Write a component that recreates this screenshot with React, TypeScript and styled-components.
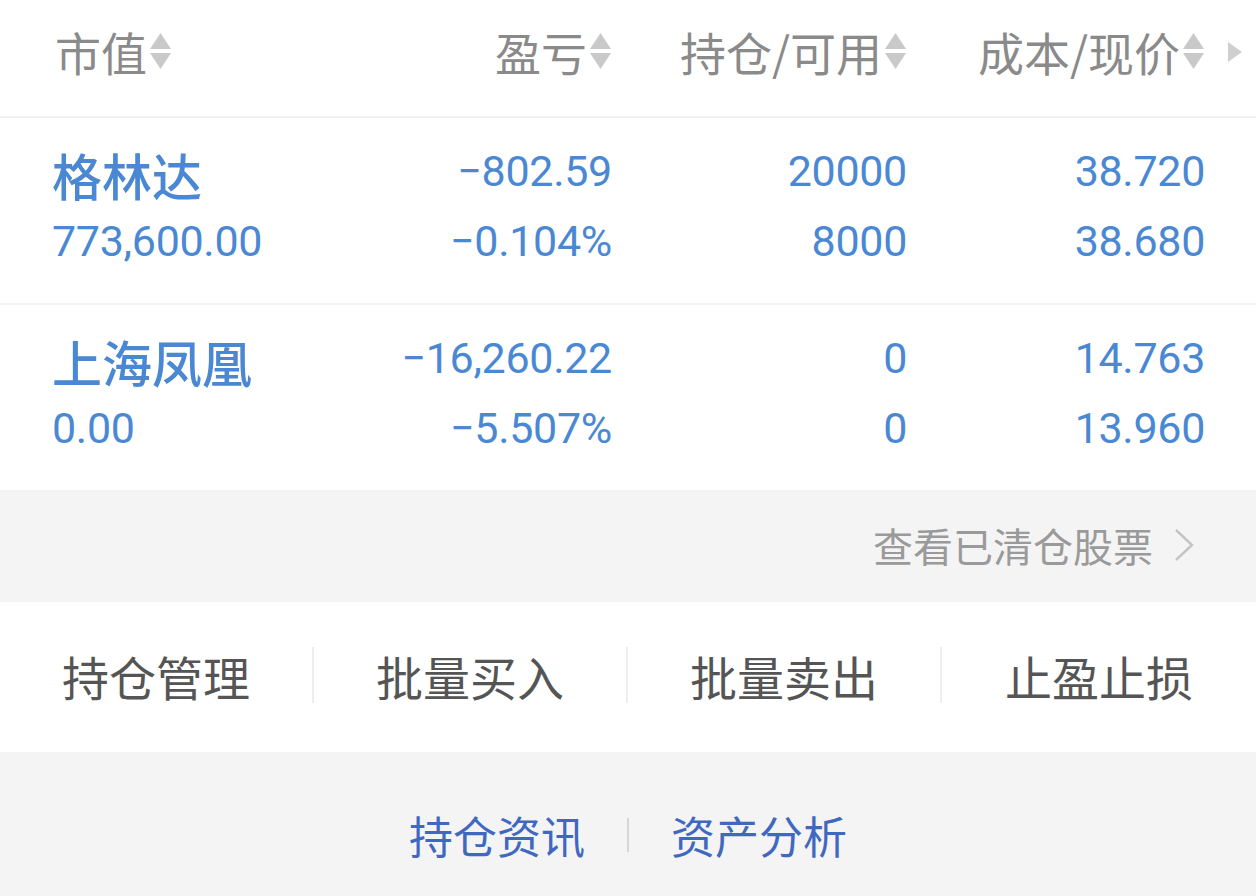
import React from "react";
import styled, { createGlobalStyle } from "styled-components";

interface Holding {
  name: string;
  marketValue: string;
  profit: string;
  profitRate: string;
  position: string;
  available: string;
  cost: string;
  price: string;
}

const holdings: Holding[] = [
  {
    name: "格林达",
    marketValue: "773,600.00",
    profit: "−802.59",
    profitRate: "−0.104%",
    position: "20000",
    available: "8000",
    cost: "38.720",
    price: "38.680",
  },
  {
    name: "上海凤凰",
    marketValue: "0.00",
    profit: "−16,260.22",
    profitRate: "−5.507%",
    position: "0",
    available: "0",
    cost: "14.763",
    price: "13.960",
  },
];

const headers = [
  { label: "市值", align: "left" },
  { label: "盈亏", align: "right" },
  { label: "持仓/可用", align: "right" },
  { label: "成本/现价", align: "right" },
];

const actions = ["持仓管理", "批量买入", "批量卖出", "止盈止损"];

const App: React.FC = () => {
  return (
    <Page>
      <GlobalStyle />
      <Header>
        <HeaderGrid>
          {headers.map((h) => (
            <HeaderCell key={h.label} $align={h.align}>
              {h.label}
              <SortIcon width="23" height="38" viewBox="0 0 23 38">
                <path d="M11.5 1 L22 17 L1 17 Z" fill="#c9c9c9" />
                <path d="M1 21 L22 21 L11.5 37 Z" fill="#c9c9c9" />
              </SortIcon>
            </HeaderCell>
          ))}
        </HeaderGrid>
        <MoreArrow width="15" height="20" viewBox="0 0 15 20">
          <path d="M1 0 L15 10 L1 20 Z" fill="#cfcfcf" />
        </MoreArrow>
      </Header>
      {holdings.map((h) => (
        <Row key={h.name}>
          <Cell $align="left">
            <Name>{h.name}</Name>
            <Num>{h.marketValue}</Num>
          </Cell>
          <Cell $align="right">
            <Num>{h.profit}</Num>
            <Num>{h.profitRate}</Num>
          </Cell>
          <Cell $align="right">
            <Num>{h.position}</Num>
            <Num>{h.available}</Num>
          </Cell>
          <Cell $align="right">
            <Num>{h.cost}</Num>
            <Num>{h.price}</Num>
          </Cell>
        </Row>
      ))}
      <ClearedBar>
        <ClearedLink>
          查看已清仓股票
          <svg width="22" height="34" viewBox="0 0 22 34">
            <path d="M3 2 L19 17 L3 32" fill="none" stroke="#c4c4c4" strokeWidth="2.4" />
          </svg>
        </ClearedLink>
      </ClearedBar>
      <ActionBar>
        {actions.map((a, i) => (
          <ActionButton key={a} $divider={i < actions.length - 1}>
            {a}
          </ActionButton>
        ))}
      </ActionBar>
      <FooterBar>
        <FooterLink>持仓资讯</FooterLink>
        <FooterDivider />
        <FooterLink>资产分析</FooterLink>
      </FooterBar>
    </Page>
  );
};

export default App;

const GlobalStyle = createGlobalStyle`
  html, body {
    margin: 0;
    padding: 0;
    background: #ffffff;
  }
  body {
    font-family: "Noto Sans CJK SC", "Noto Sans", sans-serif;
  }
`;

const Page = styled.div`
  width: 1256px;
  height: 896px;
  overflow: hidden;
  background: #ffffff;
`;

const Header = styled.div`
  position: relative;
  height: 116px;
  padding: 0 51px 0 52px;
  border-bottom: 2px solid #f0f0f0;
`;

const HeaderGrid = styled.div`
  display: grid;
  grid-template-columns: 260px 300px 295px 298px;
  height: 100%;
  align-items: center;
`;

const HeaderCell = styled.div<{ $align: string }>`
  display: flex;
  align-items: center;
  justify-content: ${(p) => (p.$align === "left" ? "flex-start" : "flex-end")};
  padding-left: ${(p) => (p.$align === "left" ? "3px" : "0")};
  font-size: 46px;
  color: #8a8a8a;
  line-height: 1;
  margin-top: -14px;
`;

const SortIcon = styled.svg`
  margin-left: 2px;
  flex-shrink: 0;
`;

const MoreArrow = styled.svg`
  position: absolute;
  right: 14px;
  top: 42px;
`;

const Row = styled.div`
  display: grid;
  grid-template-columns: 260px 300px 295px 298px;
  padding: 18px 51px 27px 52px;
  border-bottom: 2px solid #f3f3f3;
  &:last-of-type {
    border-bottom: none;
  }
`;

const Cell = styled.div<{ $align: string }>`
  display: flex;
  flex-direction: column;
  align-items: ${(p) => (p.$align === "left" ? "flex-start" : "flex-end")};
`;

const Name = styled.div`
  font-size: 50px;
  font-weight: 500;
  color: #4a88d4;
  line-height: 70px;
  height: 70px;
  padding-top: 3px;
  box-sizing: border-box;
`;

const Num = styled.div`
  font-family: Roboto, "Noto Sans", sans-serif;
  font-size: 43px;
  color: #4a88d4;
  line-height: 70px;
  letter-spacing: -0.3px;
`;

const ClearedBar = styled.div`
  height: 110px;
  background: #f4f4f4;
  display: flex;
  align-items: center;
  justify-content: flex-end;
  padding-right: 61px;
`;

const ClearedLink = styled.div`
  display: flex;
  align-items: center;
  gap: 20px;
  font-size: 40px;
  color: #9a9a9a;
  line-height: 1;
  margin-top: -4px;
`;

const ActionBar = styled.div`
  height: 150px;
  display: grid;
  grid-template-columns: repeat(4, 314px);
  align-items: center;
  background: #ffffff;
`;

const ActionButton = styled.div<{ $divider: boolean }>`
  height: 56px;
  display: flex;
  align-items: center;
  justify-content: center;
  font-size: 47px;
  color: #555555;
  border-right: ${(p) => (p.$divider ? "2px solid #eeeeee" : "none")};
  margin-top: -4px;
`;

const FooterBar = styled.div`
  height: 146px;
  background: #f4f4f4;
  display: flex;
  align-items: center;
  justify-content: center;
  gap: 42px;
  padding-top: 20px;
  box-sizing: border-box;
`;

const FooterLink = styled.div`
  font-size: 44px;
  color: #4068c0;
  line-height: 1;
`;

const FooterDivider = styled.div`
  width: 2px;
  height: 34px;
  background: #d6d6d6;
`;
